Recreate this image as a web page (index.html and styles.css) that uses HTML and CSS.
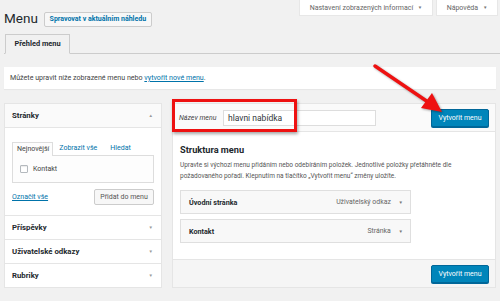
FILE: index.html
```html
<!DOCTYPE html>
<html lang="cs">
<head>
<meta charset="utf-8">
<title>Menu</title>
<link rel="stylesheet" href="styles.css">
</head>
<body>
<div class="page">
  <div class="topbar">
    <div class="title-row">
      <h1 class="title">Menu</h1>
      <span class="btn-sec">Spravovat v aktuálním náhledu</span>
    </div>
    <div class="meta-links">
      <div class="meta-tab">Nastavení zobrazených informací <span class="caret">▼</span></div>
      <div class="meta-tab">Nápověda <span class="caret">▼</span></div>
    </div>
  </div>

  <div class="nav-tabs"><div class="nav-tab">Přehled menu</div></div>

  <div class="notice">Můžete upravit níže zobrazené menu nebo <span class="link">vytvořit nové menu</span>.</div>

  <div class="columns">
    <div class="sidebar">
      <div class="acc-head open"><span>Stránky</span><span class="tri">▲</span></div>
      <div class="acc-body">
        <div class="sub-tabs">
          <span class="sub-tab active">Nejnovější</span>
          <span class="sub-tab">Zobrazit vše</span>
          <span class="sub-tab">Hledat</span>
        </div>
        <div class="sub-panel">
          <label class="check"><span class="box"></span>Kontakt</label>
        </div>
        <div class="acc-actions">
          <span class="link">Označit vše</span>
          <span class="btn-gray">Přidat do menu</span>
        </div>
      </div>
      <div class="acc-head"><span>Příspěvky</span><span class="tri">▼</span></div>
      <div class="acc-head"><span>Uživatelské odkazy</span><span class="tri">▼</span></div>
      <div class="acc-head"><span>Rubriky</span><span class="tri">▼</span></div>
    </div>

    <div class="editor">
      <div class="ed-head">
        <span class="name-label">Název menu</span>
        <span class="name-input">hlavni nabídka</span>
        <span class="btn-primary">Vytvořit menu</span>
      </div>
      <div class="ed-body">
        <h2 class="ed-title">Struktura menu</h2>
        <p class="ed-desc">Upravte si výchozí menu přidáním nebo odebíráním položek. Jednotlivé položky přetáhněte dle požadovaného pořadí. Klepnutím na tlačítko „Vytvořit menu“ změny uložíte.</p>
        <div class="items">
          <div class="item"><span class="item-title">Úvodní stránka</span><span class="item-type">Uživatelský odkaz <span class="tri">▼</span></span></div>
          <div class="item"><span class="item-title">Kontakt</span><span class="item-type">Stránka <span class="tri">▼</span></span></div>
        </div>
      </div>
      <div class="ed-foot"><span class="btn-primary">Vytvořit menu</span></div>
    </div>
  </div>

  <div class="highlight"></div>
  <svg class="arrow" width="500" height="301" viewBox="0 0 500 301">
    <line x1="375" y1="66" x2="428" y2="102" stroke="#ee1111" stroke-width="3.4" stroke-linecap="round"/>
    <polygon points="442,112 421,108 432,93" fill="#ee1111"/>
  </svg>
</div>
</body>
</html>
```

FILE: styles.css
```css
* { box-sizing: border-box; }
html, body { margin: 0; padding: 0; }
body {
  background: #f1f1f1;
  font-family: Roboto, "Liberation Sans", sans-serif;
  color: #444;
  width: 500px;
  height: 301px;
  overflow: hidden;
}
.page { position: relative; padding: 0 4px; height: 301px; }

.topbar { display: flex; align-items: flex-start; height: 27px; }
.title-row { display: flex; align-items: center; margin-top: 10px; height: 17px; }
.title { margin: 0; font-size: 13.5px; font-weight: 400; color: #23282d; line-height: 17px; }
.btn-sec {
  margin-left: 6px; margin-top: 2px;
  height: 15px; line-height: 13px; padding: 0 4px; width: 108px; text-align: center;
  border: 1px solid #ccc; background: #f7f7f7; border-radius: 2px;
  color: #0073aa; font-size: 7px; font-weight: 700; white-space: nowrap;
}
.meta-links { margin-left: auto; margin-right: -1px; display: flex; gap: 5px; }
.meta-tab {
  height: 15px; line-height: 15px; background: #fff; color: #666;
  font-size: 7px; padding: 0 6px; box-shadow: 0 0 0 1px rgba(0,0,0,0.04);
  white-space: nowrap;
}
.meta-tab:first-child { width: 132px; text-align: center; }
.meta-tab:last-child { width: 60px; text-align: center; }
.caret { font-size: 4.5px; margin-left: 3px; vertical-align: 1px; color: #777; }

.nav-tabs {
  margin-top: 7px; height: 20px; border-bottom: 1px solid #ccc;
  padding-left: 1px; display: flex; margin-right: -4px;
}
.nav-tab {
  height: 20px; width: 65px; line-height: 18px; text-align: center;
  border: 1px solid #ccc; border-bottom-color: #f1f1f1; background: #f1f1f1;
  font-size: 7.4px; font-weight: 700; color: #23282d;
}

.notice {
  margin-top: 13px; height: 22px; line-height: 22px; background: #fff;
  padding-left: 6px; font-size: 7.1px; color: #444;
  box-shadow: 0 1px 1px rgba(0,0,0,0.04);
}
.link { color: #0073aa; text-decoration: underline; }

.columns { display: flex; gap: 10px; margin-top: 14px; align-items: flex-start; }

.sidebar { width: 158px; background: #fff; border: 1px solid #e5e5e5; }
.acc-head {
  height: 24px; display: flex; align-items: center; justify-content: space-between;
  padding: 0 8px 0 7px; border-top: 1px solid #e5e5e5;
  font-size: 7.8px; font-weight: 700; color: #23282d;
}
.acc-head.open { border-top: 0; height: 24px; background: #fafafa; border-bottom: 1px solid #e5e5e5; }
.tri { font-size: 4.5px; color: #999; font-weight: 400; }
.acc-body { padding: 14px 7px 10px 7px; }
.sub-tabs { display: flex; height: 13px; font-size: 7px; }
.sub-tab { color: #0073aa; line-height: 12px; padding: 0 3px; margin-right: 3px; }
.sub-tab.active {
  color: #444; border: 1px solid #ddd; border-bottom: 0; background: #fdfdfd;
  height: 14px; position: relative; z-index: 1; padding: 0 3px 0 4px; margin-right: 3px;
}
.sub-tab:last-child { margin-left: 4px; }
.sub-panel {
  height: 28px; border: 1px solid #ddd; background: #fdfdfd;
  display: flex; align-items: center; padding-left: 7px;
}
.check { display: flex; align-items: center; font-size: 7px; color: #444; }
.box {
  width: 8px; height: 8px; border: 1px solid #b4b9be; border-radius: 1px;
  background: #fff; margin-right: 5px; box-shadow: inset 0 1px 1px rgba(0,0,0,0.08);
}
.acc-actions {
  margin-top: 6px; height: 16px; display: flex; align-items: center;
  justify-content: space-between; font-size: 7px;
}
.btn-gray {
  height: 16px; line-height: 14px; width: 60px; text-align: center;
  border: 1px solid #ccc; background: #f7f7f7; border-radius: 2px; color: #555;
  white-space: nowrap;
}

.editor { width: 324px; background: #fff; border: 1px solid #e5e5e5; }
.ed-head {
  height: 28px; display: flex; align-items: center; padding: 0 6px 0 6px;
  background: #fafafa; border-bottom: 1px solid #e5e5e5;
}
.name-label { font-size: 7px; font-style: italic; color: #444; width: 44px; }
.name-input {
  width: 153px; height: 16px; line-height: 14px; border: 1px solid #ddd; background: #fff;
  font-size: 8.5px; color: #32373c; padding-left: 4px;
}
.btn-primary {
  margin-left: auto; height: 18px; width: 58px; line-height: 16px; text-align: center;
  background: #0085ba; border: 1px solid #006799; border-radius: 2px;
  color: #fff; font-size: 7px; white-space: nowrap;
  box-shadow: 0 1px 0 #006799;
}
.ed-body { padding: 12px 7px 16px 7px; }
.ed-title { margin: 0; font-size: 9.2px; font-weight: 700; color: #23282d; line-height: 12px; }
.ed-desc { margin: 4px 0 0; font-size: 6.5px; line-height: 11px; color: #555; width: 300px; }
.items { margin-top: 8px; display: flex; flex-direction: column; gap: 5px; width: 231px; }
.item {
  height: 24px; border: 1px solid #dfdfdf; background: #f8f8f8;
  display: flex; align-items: center; justify-content: space-between; padding: 0 7px 0 8px;
}
.item-title { font-size: 7.2px; font-weight: 700; color: #23282d; }
.item-type { font-size: 6.9px; color: #666; }
.item-type .tri { margin-left: 6px; color: #777; }
.ed-foot {
  height: 28px; border-top: 1px solid #e5e5e5; background: #f5f5f5;
  display: flex; align-items: center; padding: 0 6px;
}

.highlight {
  position: absolute; left: 172px; top: 99px; width: 125px; height: 33px;
  border: 3.5px solid #ee1111; box-shadow: 1px 2px 3px rgba(0,0,0,0.35);
}
.arrow {
  position: absolute; left: 0; top: 0; pointer-events: none;
  filter: drop-shadow(1px 1px 1px rgba(0,0,0,0.35));
}
```
